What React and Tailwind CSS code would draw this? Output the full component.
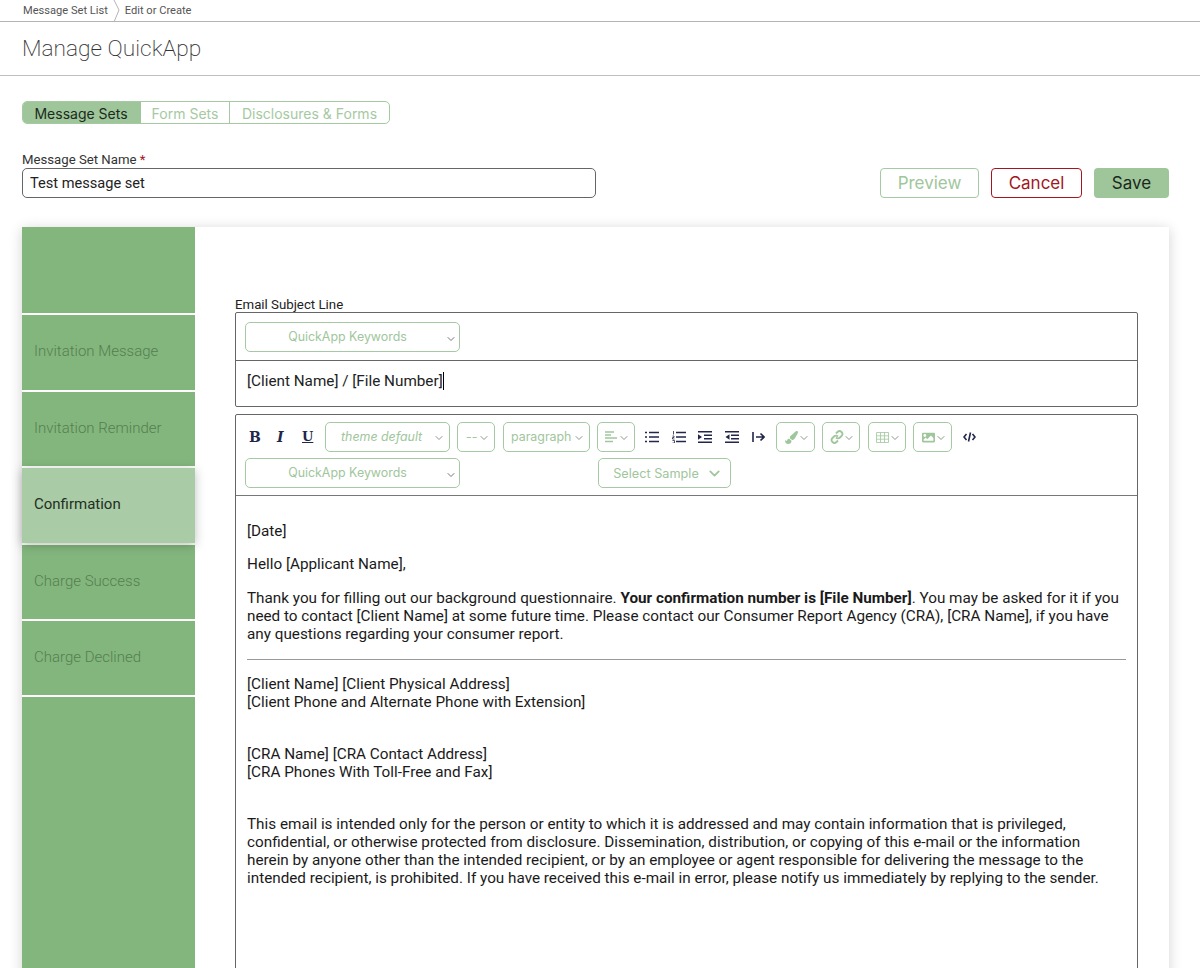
import { ChevronDown } from "lucide-react"
import { FaPaintBrush, FaImage } from "react-icons/fa"

const navItems = [
  { label: "Invitation Message", h: "h-[75px]" },
  { label: "Invitation Reminder", h: "h-[74px]" },
  { label: "Confirmation", h: "h-[75px]", active: true },
  { label: "Charge Success", h: "h-[74px]" },
  { label: "Charge Declined", h: "h-[74px]" },
]

export default function App() {
  return (
    <div className="h-[968px] overflow-hidden bg-white text-black font-['Roboto',sans-serif]">
      {/* Breadcrumb */}
      <div className="h-[22px] flex items-center pl-[23px] border-b border-[#b4b4b4] text-[11.1px] text-[#555]">
        <span className="pt-[2px]">Message Set List</span>
        <svg width="17" height="22" viewBox="0 0 17 22" className="shrink-0">
          <path d="M6 0 L11 10 L6 22" fill="none" stroke="#b4b4b4" strokeWidth="1" />
        </svg>
        <span className="pt-[2px]">Edit or Create</span>
      </div>

      {/* Title */}
      <div className="h-[54px] flex items-center pl-[22px] pt-[2px] border-b border-[#c0c0c0]">
        <h1 className="text-[22.7px] font-extralight text-[#333]">Manage QuickApp</h1>
      </div>

      {/* Tabs */}
      <div className="ml-[22px] mt-[25px] w-[368px] h-[23px] flex rounded-[5px] border border-[#a5c9a2] overflow-hidden font-['Inter',sans-serif] text-[14px] text-[#a5c9a2]">
        <div className="w-[118px] pt-px pr-[2px] bg-[#9fc59b] text-[#1b2b1b] flex items-center justify-center">Message Sets</div>
        <div className="w-[89px] pt-px flex items-center justify-center border-r border-[#a5c9a2]">Form Sets</div>
        <div className="flex-1 pt-px flex items-center justify-center">Disclosures &amp; Forms</div>
      </div>

      {/* Name row */}
      <div className="mt-[27px] mr-[31px] ml-[22px] flex items-end justify-between">
        <div>
          <label className="block text-[13.2px] leading-[17px] text-[#333]">
            Message Set Name <span className="text-[#a3161d]">*</span>
          </label>
          <div className="w-[574px] h-[30px] border border-[#666] rounded-[5px] pl-[7px] pt-px flex items-center text-[14.6px] text-[#222]">
            Test message set
          </div>
        </div>
        <div className="flex gap-3 font-['Inter',sans-serif] text-[17px]">
          <button className="w-[99px] h-[30px] pt-px rounded-[4px] border border-[#a5c9a2] text-[#a0c69c]">Preview</button>
          <button className="w-[91px] h-[30px] pt-px rounded-[4px] border border-[#a3161d] text-[#a3161d]">Cancel</button>
          <button className="w-[75px] h-[30px] pt-[2px] rounded-[4px] bg-[#9fc59b] text-[#1a2a1a]">Save</button>
        </div>
      </div>

      {/* Panel */}
      <div className="mt-[29px] ml-[22px] w-[1147px] flex bg-white shadow-[0_2px_12px_rgba(0,0,0,0.18)] h-[800px]">
        <div className="w-[173px] shrink-0 flex flex-col gap-[2px]">
          <div className="h-[86px] bg-[#83b67d]" />
          {navItems.map((item) => (
            <div
              key={item.label}
              className={`${item.h} flex items-center pl-[12px] pb-[2px] text-[15px] ${
                item.active
                  ? "relative bg-[#a9cba6] text-[#1f2f1f] shadow-[0_2px_10px_rgba(0,0,0,0.25)]"
                  : "bg-[#83b67d] text-[#557f50] font-light"
              }`}
            >
              {item.label}
            </div>
          ))}
          <div className="flex-1 bg-[#83b67d]" />
        </div>

        <div className="flex-1 pl-[40px] pr-[31px] pt-[70px]">
          <label className="block text-[13.25px] leading-[15px] text-[#222]">Email Subject Line</label>
          <div className="border border-[#666] rounded-[2px]">
            <div className="h-[48px] border-b border-[#666] flex items-center pl-[9px]">
              <Select />
            </div>
            <div className="h-[45px] pl-[11px] pt-[10px] text-[15.27px] leading-[20px] text-[#222]">
              [Client Name] / [File Number]<span className="border-l border-black" />
            </div>
          </div>

          {/* Editor */}
          <div className="mt-[7px] border border-[#666] rounded-[2px] h-[700px]">
            <div className="h-[81px] border-b border-[#777] pl-[9px] pt-[7px]">
              <div className="flex items-center h-[30px] text-[#22264a]">
                <span className="ml-[4px] w-[14px] text-[14px] font-bold font-['DejaVu_Serif',serif]">B</span>
                <span className="ml-[14px] w-[12px] text-[14px] italic font-bold font-['DejaVu_Serif',serif]">I</span>
                <span className="ml-[13px] w-[14px] text-[13px] font-bold underline font-['DejaVu_Serif',serif]">U</span>
                <Pill w="w-[125px] ml-[9px]" className="italic pl-[15px]">theme default</Pill>
                <Pill w="w-[38px] ml-[7px]" className="pl-[8px]">--</Pill>
                <Pill w="w-[87px] ml-[8px]" className="pl-[7px]">paragraph</Pill>
                <Pill w="w-[38px] ml-[7px]" className="pl-[7px]"><AlignIcon /></Pill>
                <ListIcon className="ml-[10px]" />
                <OrderedIcon className="ml-[13px]" />
                <IndentIcon className="ml-[12px]" />
                <OutdentIcon className="ml-[13px]" />
                <ArrowIcon className="ml-[13px]" />
                <Pill w="w-[39px] ml-[11px]" className="pl-[8px]"><FaPaintBrush size={13} /></Pill>
                <Pill w="w-[38px] ml-[7px]" className="pl-[7px]"><LinkIcon /></Pill>
                <Pill w="w-[38px] ml-[8px]" className="pl-[7px]"><TableIcon /></Pill>
                <Pill w="w-[39px] ml-[7px]" className="pl-[8px]"><FaImage size={13} /></Pill>
                <CodeIcon className="ml-[11px]" />
              </div>
              <div className="flex mt-[6px]">
                <Select />
                <div className="ml-[138px] w-[133px] h-[30px] pt-px pl-[7px] rounded-[5px] border border-[#a5c9a2] flex items-center justify-center gap-[7px] font-['Inter',sans-serif] text-[12.7px] text-[#a0c69c]">
                  Select Sample <ChevronDown size={17} strokeWidth={2.5} />
                </div>
              </div>
            </div>

            <div className="px-[11px] pt-[26px] text-[15.27px] leading-[18px] text-[#1a1a1a]">
              <p>[Date]</p>
              <p className="mt-[15px]">Hello [Applicant Name],</p>
              <p className="mt-[16px]">
                Thank you for filling out our background questionnaire. <b>Your confirmation number is [File Number]</b>. You may be asked for it if you need to contact [Client Name] at some future time. Please contact our Consumer Report Agency (CRA), [CRA Name], if you have any questions regarding your consumer report.
              </p>
              <hr className="mt-[16px] border-[#999]" />
              <p className="mt-[15px]">[Client Name] [Client Physical Address]</p>
              <p>[Client Phone and Alternate Phone with Extension]</p>
              <p className="mt-[34px]">[CRA Name] [CRA Contact Address]</p>
              <p>[CRA Phones With Toll-Free and Fax]</p>
              <p className="mt-[34px] pr-[6px]">
                This email is intended only for the person or entity to which it is addressed and may contain information that is privileged, confidential, or otherwise protected from disclosure. Dissemination, distribution, or copying of this e-mail or the information herein by anyone other than the intended recipient, or by an employee or agent responsible for delivering the message to the intended recipient, is prohibited. If you have received this e-mail in error, please notify us immediately by replying to the sender.
              </p>
            </div>
          </div>
        </div>
      </div>
    </div>
  )
}

function Select() {
  return (
    <div className="w-[215px] h-[30px] rounded-[5px] border border-[#a5c9a2] relative flex items-center justify-center pt-px pr-[10px] font-['Inter',sans-serif] text-[12.4px] text-[#a0c69c]">
      QuickApp Keywords
      <ChevronDown size={12} className="absolute right-[2px] top-[10px] text-[#777]" />
    </div>
  )
}

function Pill({ w, className = "", children }) {
  return (
    <div className={`${w} ${className} relative h-[30px] shrink-0 rounded-[5px] border border-[#a5c9a2] flex items-center font-['Inter',sans-serif] text-[12.4px] text-[#a0c69c] overflow-hidden`}>
      {children}
      <ChevronDown size={12} className="absolute right-[4px] top-[9px] text-[#8a9a8a]" />
    </div>
  )
}

/* toolbar glyphs */
function AlignIcon() {
  return (
    <svg width="13" height="12" viewBox="0 0 13 12" fill="none" stroke="currentColor" strokeWidth="1.4">
      <path d="M0 1h9M0 4h6M0 7h12M0 10.5h8" />
    </svg>
  )
}

function ListIcon({ className }) {
  return (
    <svg width="14" height="12" viewBox="0 0 14 12" fill="none" stroke="currentColor" strokeWidth="1.5" className={`shrink-0 ${className}`}>
      <path d="M4 1.5h10M4 6h10M4 10.5h10M0 1.5h2M0 6h2M0 10.5h2" />
    </svg>
  )
}

function OrderedIcon({ className }) {
  return (
    <svg width="14" height="12" viewBox="0 0 14 12" fill="none" stroke="currentColor" className={`shrink-0 ${className}`}>
      <path d="M4 1.5h10M4 6h10M4 10.5h10" strokeWidth="1.5" />
      <path d="M1.5 0v3.5M0.5 5h1.5v1.5h-1.5v1.5h2M0.5 9.5h2v2.5h-2" strokeWidth="0.8" />
    </svg>
  )
}

function IndentIcon({ className }) {
  return (
    <svg width="14" height="12" viewBox="0 0 14 12" fill="none" stroke="currentColor" strokeWidth="1.4" className={`shrink-0 ${className}`}>
      <path d="M0 .8h14M6 4.3h8M6 7.8h8M0 11.2h14" />
      <path d="M0 3.2 L4 6 L0 8.8Z" fill="currentColor" stroke="none" />
    </svg>
  )
}

function OutdentIcon({ className }) {
  return (
    <svg width="14" height="12" viewBox="0 0 14 12" fill="none" stroke="currentColor" strokeWidth="1.4" className={`shrink-0 ${className}`}>
      <path d="M0 .8h14M6 4.3h8M6 7.8h8M0 11.2h14" />
      <path d="M4.5 3.2 L.5 6 L4.5 8.8Z" fill="currentColor" stroke="none" />
    </svg>
  )
}

function ArrowIcon({ className }) {
  return (
    <svg width="13" height="10" viewBox="0 0 13 10" fill="none" stroke="currentColor" strokeWidth="1.6" className={`shrink-0 ${className}`}>
      <path d="M1 0v10M4 5h8M8.5 1.5L12 5l-3.5 3.5" />
    </svg>
  )
}

function LinkIcon() {
  return (
    <svg width="14" height="14" viewBox="0 0 14 14" fill="none" stroke="currentColor" strokeWidth="1.8">
      <path d="M6 3.5l1.5-1.5a2.8 2.8 0 0 1 4 4L10 7.5a2.8 2.8 0 0 1-4 0" />
      <path d="M8 10.5L6.5 12a2.8 2.8 0 0 1-4-4L4 6.5a2.8 2.8 0 0 1 4 0" />
    </svg>
  )
}

function TableIcon() {
  return (
    <svg width="13" height="11" viewBox="0 0 13 11" fill="none" stroke="currentColor" strokeWidth="0.8">
      <path d="M.5.5h12v10H.5zM.5 3.8h12M.5 7.2h12M4.5.5v10M8.5.5v10" />
    </svg>
  )
}

function CodeIcon({ className }) {
  return (
    <svg width="13" height="10" viewBox="0 0 13 10" fill="none" stroke="currentColor" strokeWidth="1.6" className={`shrink-0 ${className}`}>
      <path d="M3.5 2L1 5l2.5 3M9.5 2L12 5l-2.5 3M7.5 0.5L5.5 9.5" />
    </svg>
  )
}
